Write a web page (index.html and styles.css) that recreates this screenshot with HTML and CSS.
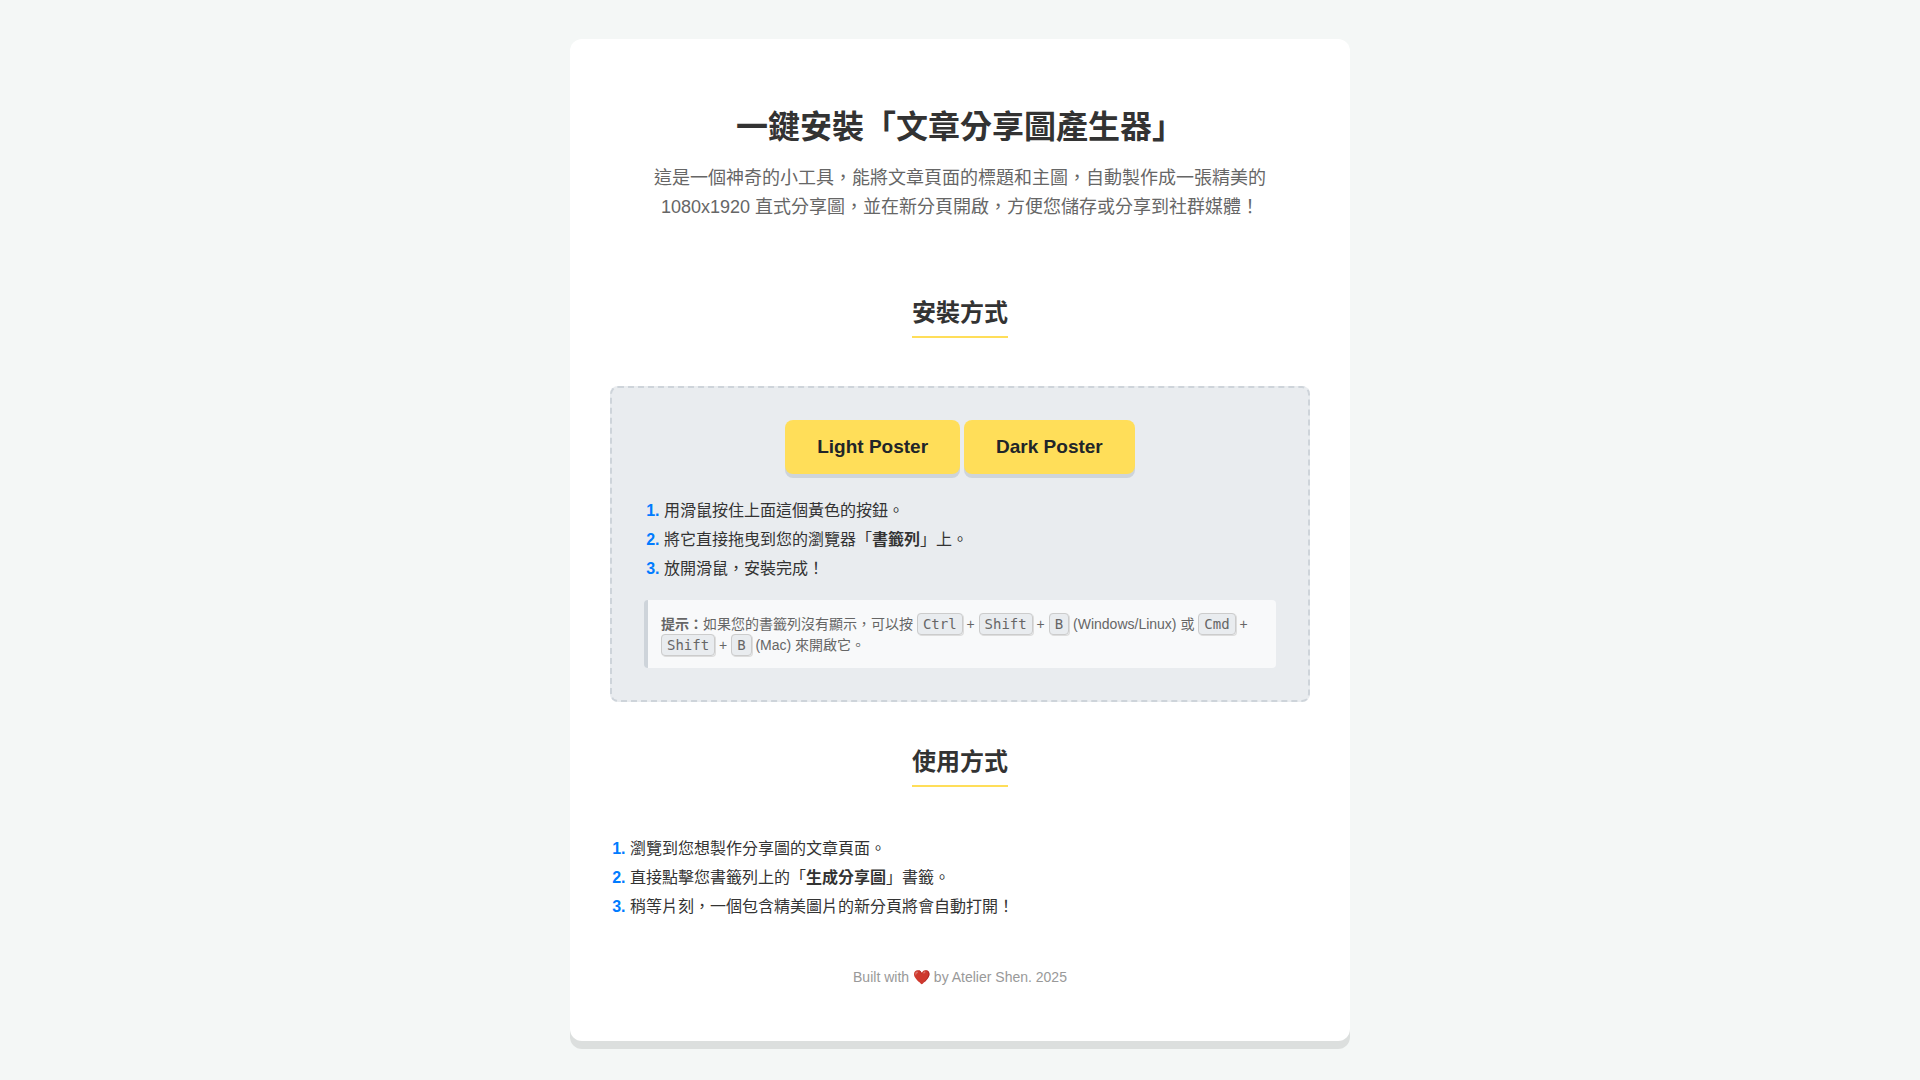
FILE: index.html
```html
<!DOCTYPE html>
<html lang="zh-TW">
<head>
    <meta charset="UTF-8">
    <meta name="viewport" content="width=device-width, initial-scale=1.0">
    <title>一鍵安裝「文章分享圖產生器」</title>
    <link rel="stylesheet" href="styles.css">
</head>
<body>
    <main class="container">
        <header>
            <h1>一鍵安裝「文章分享圖產生器」</h1>
            <p class="intro">這是一個神奇的小工具，能將文章頁面的標題和主圖，自動製作成一張精美的 1080x1920 直式分享圖，並在新分頁開啟，方便您儲存或分享到社群媒體！</p>
        </header>

        <section>
            <h2>安裝方式</h2>
            <div class="install-box">
                <div class="buttons">
                    <a href="#light" class="bookmarklet">Light Poster</a>
                    <a href="#dark" class="bookmarklet">Dark Poster</a>
                </div>
                <ol class="steps">
                    <li>用滑鼠按住上面這個黃色的按鈕。</li>
                    <li>將它直接拖曳到您的瀏覽器「<strong>書籤列</strong>」上。</li>
                    <li>放開滑鼠，安裝完成！</li>
                </ol>
                <div class="tip">
                    <strong>提示：</strong>如果您的書籤列沒有顯示，可以按 <kbd>Ctrl</kbd> + <kbd>Shift</kbd> + <kbd>B</kbd> (Windows/Linux) 或 <kbd>Cmd</kbd> + <kbd>Shift</kbd> + <kbd>B</kbd> (Mac) 來開啟它。
                </div>
            </div>
        </section>

        <section>
            <h2>使用方式</h2>
            <ol class="steps">
                <li>瀏覽到您想製作分享圖的文章頁面。</li>
                <li>直接點擊您書籤列上的「<strong>生成分享圖</strong>」書籤。</li>
                <li>稍等片刻，一個包含精美圖片的新分頁將會自動打開！</li>
            </ol>
        </section>

        <footer>Built with <span class="heart">❤️</span> by Atelier Shen. 2025</footer>
    </main>
</body>
</html>
```

FILE: styles.css
```css
body {
    font-family: "Liberation Sans", "Noto Sans CJK TC", sans-serif;
    font-size: 16px;
    line-height: 1.8;
    color: #333;
    background-color: #f4f7f6;
    margin: 0;
    padding: 39px 20px;
}

.container {
    max-width: 700px;
    margin: 0 auto;
    padding: 40px;
    background-color: #fff;
    border-radius: 12px;
    box-shadow: 0 8px 0 #dcdfde;
}

header {
    text-align: center;
    padding: 19px 0 31px;
}

h1 {
    font-size: 32px;
    line-height: 58px;
    margin: 0 0 8px;
}

.intro {
    font-size: 18px;
    line-height: 29px;
    color: #666;
    max-width: 620px;
    margin: 0 auto;
}

h2 {
    width: fit-content;
    font-size: 24px;
    line-height: 39px;
    margin: 40px auto 48px;
    padding-bottom: 4px;
    border-bottom: 2px solid #ffde59;
}

.install-box {
    background-color: #e9ecef;
    border: 2px dashed #ced4da;
    border-radius: 8px;
    padding: 32px;
}

.buttons {
    display: flex;
    flex-wrap: wrap;
    justify-content: center;
    gap: 4px;
}

.bookmarklet {
    padding: 10px 32px;
    background-color: #ffde59;
    color: #212529;
    font-size: 19px;
    line-height: 34px;
    font-weight: bold;
    text-decoration: none;
    border-radius: 8px;
    box-shadow: 0 4px 0 #ced4da;
}

.steps {
    margin: 23px 0 17px;
    padding-left: 20px;
}

.steps li::marker {
    color: #007bff;
    font-weight: bold;
}

.tip {
    font-size: 14px;
    line-height: 21px;
    color: #666;
    background-color: #f8f9fa;
    border-left: 4px solid #ced4da;
    border-radius: 4px;
    padding: 14px 13px 12px;
}

kbd {
    font-family: "DejaVu Sans Mono", monospace;
    font-size: 14px;
    line-height: 1;
    background-color: #e9ecef;
    border: 1px solid #ccc;
    border-radius: 4px;
    padding: 2px 5px;
    box-shadow: 1px 1px 0 #ddd;
}

footer {
    text-align: center;
    font-size: 14px;
    line-height: 24px;
    color: #999;
    margin: 43px 0 12px;
}

.heart {
    filter: brightness(0.85);
}
```
